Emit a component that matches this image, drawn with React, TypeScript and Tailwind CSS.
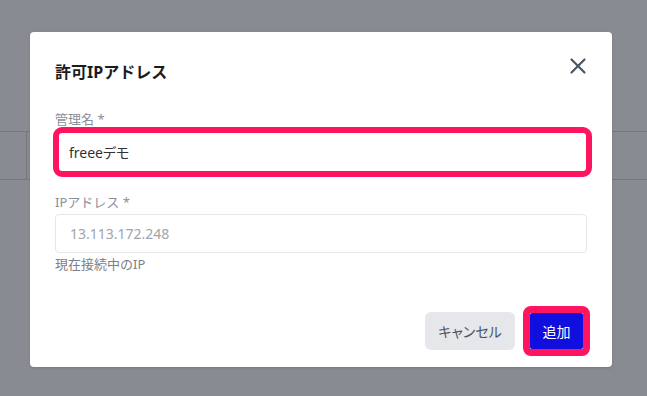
import React from 'react';
import { X } from 'lucide-react';

const jp = { fontFamily: '"Noto Sans", "Noto Sans CJK JP", sans-serif' };

const App = () => {
  return (
    <div className="relative w-[647px] h-[396px] overflow-hidden bg-[#898b93]" style={jp}>
      {/* Page behind the backdrop */}
      <div className="mt-[131px] h-[49px] border-y border-[#75777f] flex">
        <div className="w-[27px] border-r border-[#75777f]" />
      </div>

      {/* Modal */}
      <div className="absolute left-[30px] top-[32px] w-[582px] h-[335px] bg-white rounded-[4px] shadow-sm px-[25px] pt-[28px] flex flex-col">
        <div className="flex justify-between items-start">
          <h2 className="text-[16px] leading-[24px] font-bold text-[#1c1c1c]">許可IPアドレス</h2>
          <button className="-mt-[7px] -mr-[4px] text-[#4b5563]">
            <X size={26} strokeWidth={2} />
          </button>
        </div>

        <label className="mt-[27px] text-[13px] leading-[16px] text-[#8a8f98]">管理名 *</label>
        <div className="-ml-[2px] -mr-[5px] border-[6px] border-[#ff1460] rounded-[9px]">
          <div className="h-[38px] flex items-center pl-[10px] text-[14px] text-[#333333] [font-feature-settings:'palt']">
            freeeデモ
          </div>
        </div>

        <label className="mt-[17px] text-[13px] leading-[16px] text-[#8a8f98]">IPアドレス *</label>
        <div className="mt-[4px] h-[39px] border border-[#e5e7eb] rounded-[4px] flex items-center px-[14px] text-[14px] text-[#a0a4ab]">
          13.113.172.248
        </div>
        <p className="mt-[3px] text-[13px] leading-[16px] text-[#7b8089]">現在接続中のIP</p>

        <div className="mt-[34px] flex justify-end items-center gap-[8px] -mr-[3px] [font-feature-settings:'palt']">
          <button className="w-[90px] h-[38px] rounded-[6px] bg-[#e5e7eb] text-[14px] text-[#4b5563]">
            キャンセル
          </button>
          <div className="border-[7px] border-[#ff1460] rounded-[8px]">
            <button className="block w-[53px] h-[36px] bg-[#100fdd] rounded-[2px] text-[14px] text-white">
              追加
            </button>
          </div>
        </div>
      </div>
    </div>
  );
};

export default App;
